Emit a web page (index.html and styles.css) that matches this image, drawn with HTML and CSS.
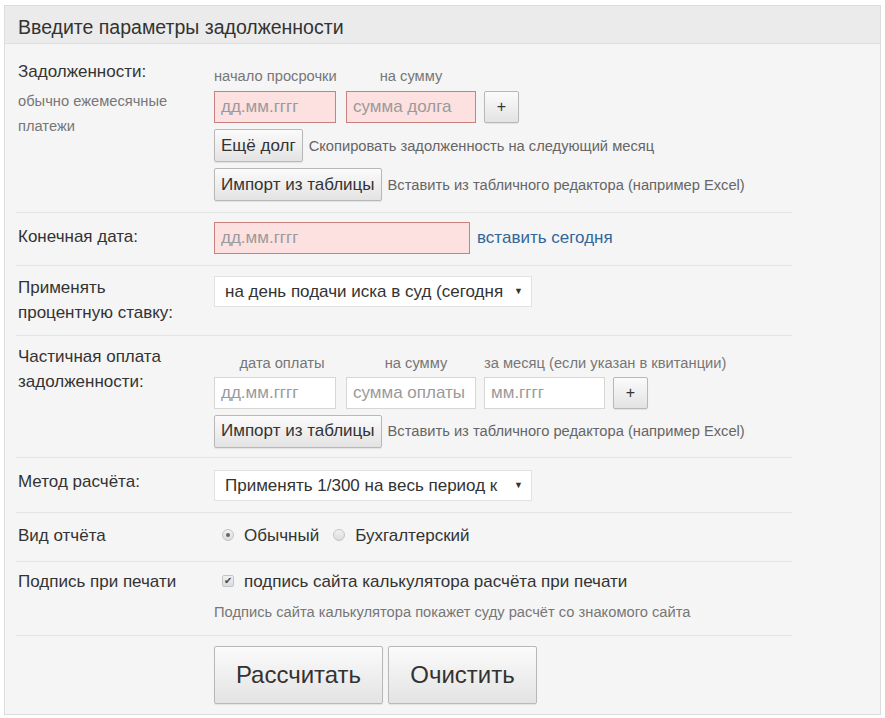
FILE: index.html
```html
<!DOCTYPE html>
<html lang="ru">
<head>
<meta charset="utf-8">
<title>Калькулятор</title>
<link rel="stylesheet" href="styles.css">
</head>
<body>
<div class="panel">
  <div class="panel-head">Введите параметры задолженности</div>
  <div class="panel-body">
    <div class="row row-debts">
      <div class="label">Задолженности:<div class="note">обычно ежемесячные платежи</div></div>
      <div class="ctrl">
        <div class="caps">
          <span class="cap c1">начало просрочки</span>
          <span class="cap c2">на сумму</span>
        </div>
        <div class="line">
          <input class="inp w1 bad" placeholder="дд.мм.гггг">
          <input class="inp w2 bad" placeholder="сумма долга">
          <button class="btn plus">+</button>
        </div>
        <div class="line">
          <button class="btn">Ещё долг</button>
          <span class="desc">Скопировать задолженность на следующий месяц</span>
        </div>
        <div class="line">
          <button class="btn">Импорт из таблицы</button>
          <span class="desc">Вставить из табличного редактора (например Excel)</span>
        </div>
      </div>
    </div>
    <div class="row row-end">
      <div class="label">Конечная дата:</div>
      <div class="ctrl">
        <div class="line">
          <input class="inp wide bad" placeholder="дд.мм.гггг">
          <a class="link" href="#">вставить сегодня</a>
        </div>
      </div>
    </div>
    <div class="row row-rate">
      <div class="label">Применять<br>процентную ставку:</div>
      <div class="ctrl">
        <div class="sel"><span class="sel-text">на день подачи иска в суд (сегодня</span><span class="arrow">▼</span></div>
      </div>
    </div>
    <div class="row row-pay">
      <div class="label">Частичная оплата задолженности:</div>
      <div class="ctrl">
        <div class="caps">
          <span class="cap c1">дата оплаты</span>
          <span class="cap c2">на сумму</span>
          <span class="cap c3">за месяц (если указан в квитанции)</span>
        </div>
        <div class="line">
          <input class="inp w1" placeholder="дд.мм.гггг">
          <input class="inp w2" placeholder="сумма оплаты">
          <input class="inp w3" placeholder="мм.гггг">
          <button class="btn plus">+</button>
        </div>
        <div class="line">
          <button class="btn">Импорт из таблицы</button>
          <span class="desc">Вставить из табличного редактора (например Excel)</span>
        </div>
      </div>
    </div>
    <div class="row row-method">
      <div class="label">Метод расчёта:</div>
      <div class="ctrl">
        <div class="sel"><span class="sel-text">Применять 1/300 на весь период к</span><span class="arrow">▼</span></div>
      </div>
    </div>
    <div class="row row-view">
      <div class="label">Вид отчёта</div>
      <div class="ctrl opts">
        <label class="opt"><span class="radio on"></span>Обычный</label>
        <label class="opt"><span class="radio"></span>Бухгалтерский</label>
      </div>
    </div>
    <div class="row row-sign">
      <div class="label">Подпись при печати</div>
      <div class="ctrl">
        <label class="opt"><span class="check">✔</span>подпись сайта калькулятора расчёта при печати</label>
        <div class="hint">Подпись сайта калькулятора покажет суду расчёт со знакомого сайта</div>
      </div>
    </div>
    <div class="row row-actions">
      <div class="label"></div>
      <div class="ctrl actions">
        <button class="btn big">Рассчитать</button>
        <button class="btn big">Очистить</button>
      </div>
    </div>
  </div>
</div>
</body>
</html>
```
FILE: styles.css
```css
* { box-sizing: border-box; }
body {
  margin: 0;
  background: #fff;
  font-family: "Liberation Sans", Arial, sans-serif;
  color: #333;
}
.panel {
  margin: 5px 4px 3px 4px;
  border: 1px solid #dcdcdc;
  background: #f5f5f5;
}
.panel-head {
  background: #ebebeb;
  border-bottom: 1px solid #dedede;
  height: 38px;
  padding: 10px 13px 0;
  font-size: 19.5px;
  line-height: 22px;
  color: #333;
}
.panel-body {
  padding: 0 0 10px 11px;
}
.row {
  width: 776px;
  display: grid;
  grid-template-columns: 198px 1fr;
  border-bottom: 1px solid #e4e4e4;
}
.row-actions { border-bottom: none; }
.label {
  padding-left: 2px;
  padding-right: 6px;
  font-size: 17px;
  line-height: 25px;
  color: #333;
}
.note {
  font-size: 14.7px;
  color: #777;
  margin-top: 5px;
}
.ctrl { display: flex; flex-direction: column; align-items: flex-start; }
.caps { display: flex; height: 17px; font-size: 14.7px; line-height: 17px; color: #777; margin-bottom: 6px; }
.cap { display: block; white-space: nowrap; }
.c1 { width: 122px; margin-right: 10px; text-align: center; }
.c2 { width: 130px; margin-right: 8px; text-align: center; }
.c3 { text-align: left; }
.row-pay .c1 { padding-left: 14px; }
.row-pay .c2 { padding-left: 10px; }
.line { display: flex; align-items: center; margin-bottom: 6px; }
.line:last-child { margin-bottom: 0; }
.inp {
  height: 32px;
  border: 1px solid #d6d6d6;
  background: #fff;
  padding: 0 6px;
  font-family: inherit;
  font-size: 17px;
  color: #333;
  outline: none;
}
.inp::placeholder { color: #9a9a9a; }
.inp.bad { background: #fde0e0; border-color: #c9817f; }
.w1 { width: 122px; margin-right: 10px; }
.w2 { width: 130px; margin-right: 8px; }
.w3 { width: 121px; margin-right: 8px; }
.wide { width: 256px; margin-right: 7px; }
.btn {
  font-family: inherit;
  font-size: 17px;
  color: #333;
  height: 33px;
  padding: 0 6px;
  border: 1px solid #b8b8b8;
  border-radius: 2px;
  background: linear-gradient(#fbfbfb, #e3e3e3);
  box-shadow: 0 1px 1px rgba(0,0,0,0.08);
}
.btn.plus { width: 35px; height: 32px; padding: 0; font-size: 16px; }
.desc { font-size: 14.7px; color: #666; margin-left: 6px; }
.link { font-size: 17px; color: #33669a; text-decoration: none; }
.sel {
  position: relative;
  width: 318px;
  height: 31px;
  background: #fff;
  border: 1px solid #e2e2e2;
  padding: 0 20px 0 10px;
  font-size: 17px;
  line-height: 29px;
  color: #333;
  overflow: hidden;
  white-space: nowrap;
}
.sel-text { display: block; overflow: hidden; }
.arrow {
  position: absolute;
  right: 8px;
  top: 0;
  font-size: 9px;
  color: #333;
}
.row-debts { padding: 0 0 11px; }
.row-debts .label { padding-top: 15px; }
.row-debts .ctrl { padding-top: 24px; }
.row-end { padding: 9px 0 11px; }
.row-end .label { padding-top: 2px; }
.row-rate { padding: 10px 0 10px; }
.row-rate .label { margin-top: -1.5px; }
.row-pay { padding: 8px 0 9px; }
.row-pay .ctrl { padding-top: 11px; }
.row-pay .caps { margin-bottom: 5px; }
.row-method { padding: 12px 0 11px; }
.row-method .label { margin-top: -0.5px; }
.row-view { padding: 10px 0 13px; }
.opts { flex-direction: row; align-items: center; height: 25px; }
.opt { display: flex; align-items: center; font-size: 17px; line-height: 25px; color: #333; margin-right: 6px; }
.radio {
  width: 12px; height: 12px; border-radius: 50%;
  border: 1px solid #c4c4c4;
  background: linear-gradient(#f2f2f2, #dcdcdc);
  margin: 0 10px 0 8px;
  position: relative;
}
.radio.on::after {
  content: "";
  position: absolute;
  left: 3px; top: 3px;
  width: 4px; height: 4px; border-radius: 50%;
  background: #666;
}
.check {
  width: 12px; height: 12px;
  border: 1px solid #c4c4c4;
  border-radius: 2px;
  background: linear-gradient(#f2f2f2, #dcdcdc);
  margin: 0 10px 0 8px;
  font-size: 10px; line-height: 10px; text-align: center; color: #444;
}
.row-sign { padding: 7px 0 14px; }
.hint { font-size: 14.7px; color: #777; margin-top: 10px; line-height: 17px; }
.row-actions { padding: 10px 0 0; }
.actions { flex-direction: row; }
.btn.big { height: 58px; font-size: 24px; padding: 0 10px; margin-right: 5px; }
.btn.big:first-child { width: 169px; }
.btn.big:last-child { width: 149px; }
```
